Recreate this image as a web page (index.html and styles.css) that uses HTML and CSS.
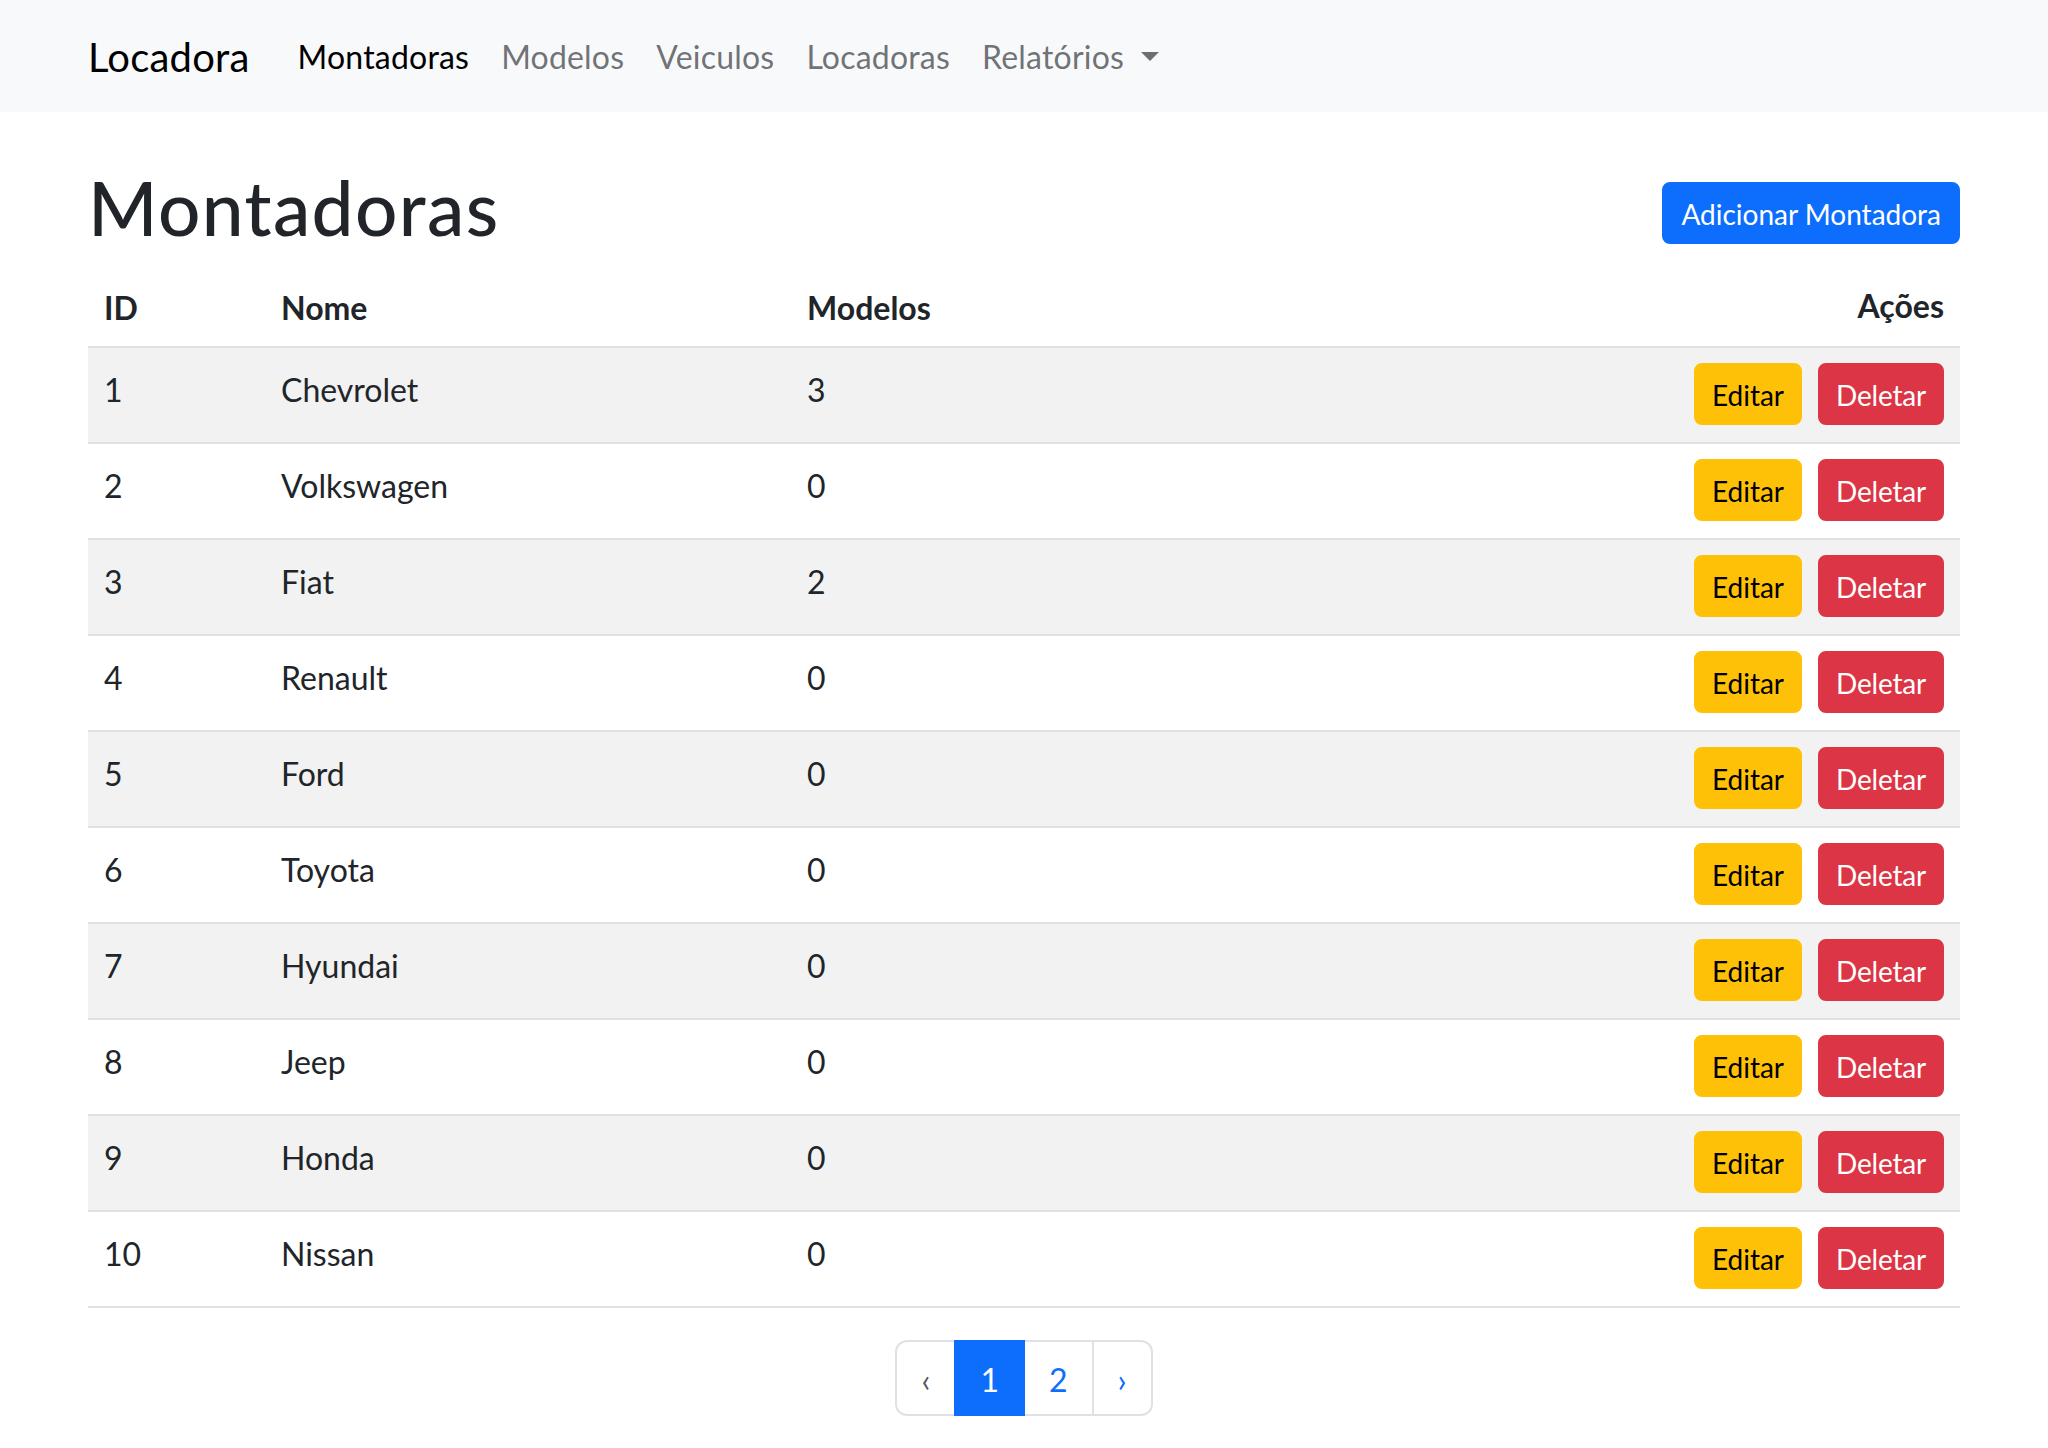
FILE: index.html
```html
<!DOCTYPE html>
<html lang="pt-BR">
<head>
<meta charset="utf-8">
<title>Montadoras</title>
<link rel="stylesheet" href="styles.css">
</head>
<body>
<nav class="navbar">
  <div class="container nav-inner">
    <a class="brand" href="#">Locadora</a>
    <ul class="nav">
      <li><a class="nav-link active" href="#">Montadoras</a></li>
      <li><a class="nav-link" href="#">Modelos</a></li>
      <li><a class="nav-link" href="#">Veiculos</a></li>
      <li><a class="nav-link" href="#">Locadoras</a></li>
      <li><a class="nav-link dropdown-toggle" href="#">Relatórios </a></li>
    </ul>
  </div>
</nav>
<main class="container">
  <div class="page-head">
    <h1>Montadoras</h1>
    <a class="btn btn-primary" href="#">Adicionar Montadora</a>
  </div>
  <table class="table">
    <colgroup>
      <col class="c-id"><col class="c-nome"><col class="c-mod"><col>
    </colgroup>
    <thead>
      <tr><th>ID</th><th>Nome</th><th>Modelos</th><th class="text-end">Ações</th></tr>
    </thead>
    <tbody>
      <tr><td>1</td><td>Chevrolet</td><td>3</td><td class="actions"><div class="acts"><a class="btn btn-warning" href="#">Editar</a><a class="btn btn-danger" href="#">Deletar</a></div></td></tr>
      <tr><td>2</td><td>Volkswagen</td><td>0</td><td class="actions"><div class="acts"><a class="btn btn-warning" href="#">Editar</a><a class="btn btn-danger" href="#">Deletar</a></div></td></tr>
      <tr><td>3</td><td>Fiat</td><td>2</td><td class="actions"><div class="acts"><a class="btn btn-warning" href="#">Editar</a><a class="btn btn-danger" href="#">Deletar</a></div></td></tr>
      <tr><td>4</td><td>Renault</td><td>0</td><td class="actions"><div class="acts"><a class="btn btn-warning" href="#">Editar</a><a class="btn btn-danger" href="#">Deletar</a></div></td></tr>
      <tr><td>5</td><td>Ford</td><td>0</td><td class="actions"><div class="acts"><a class="btn btn-warning" href="#">Editar</a><a class="btn btn-danger" href="#">Deletar</a></div></td></tr>
      <tr><td>6</td><td>Toyota</td><td>0</td><td class="actions"><div class="acts"><a class="btn btn-warning" href="#">Editar</a><a class="btn btn-danger" href="#">Deletar</a></div></td></tr>
      <tr><td>7</td><td>Hyundai</td><td>0</td><td class="actions"><div class="acts"><a class="btn btn-warning" href="#">Editar</a><a class="btn btn-danger" href="#">Deletar</a></div></td></tr>
      <tr><td>8</td><td>Jeep</td><td>0</td><td class="actions"><div class="acts"><a class="btn btn-warning" href="#">Editar</a><a class="btn btn-danger" href="#">Deletar</a></div></td></tr>
      <tr><td>9</td><td>Honda</td><td>0</td><td class="actions"><div class="acts"><a class="btn btn-warning" href="#">Editar</a><a class="btn btn-danger" href="#">Deletar</a></div></td></tr>
      <tr><td>10</td><td>Nissan</td><td>0</td><td class="actions"><div class="acts"><a class="btn btn-warning" href="#">Editar</a><a class="btn btn-danger" href="#">Deletar</a></div></td></tr>
    </tbody>
  </table>
  <nav class="pager">
    <ul class="pagination">
      <li class="page-item disabled"><span class="page-link">&lsaquo;</span></li>
      <li class="page-item active"><span class="page-link">1</span></li>
      <li class="page-item"><a class="page-link" href="#">2</a></li>
      <li class="page-item"><a class="page-link" href="#">&rsaquo;</a></li>
    </ul>
  </nav>
</main>
</body>
</html>
```
FILE: styles.css
```css
* { box-sizing: border-box; }

body {
  margin: 0;
  font-family: Lato, "Open Sans", sans-serif;
  font-size: 32px;
  line-height: 1.5;
  color: #212529;
  background: #fff;
}

.container {
  width: 1920px;
  margin: 0 auto;
  padding: 0 24px;
}

/* navbar */
.navbar {
  background: #f8f9fa;
  padding: 16px 0;
}
.nav-inner {
  display: flex;
  align-items: center;
}
.brand {
  font-size: 40px;
  line-height: 1.5;
  padding: 11px 0 9px;
  margin-right: 32px;
  color: #000;
  text-decoration: none;
  letter-spacing: 0.2px;
}
.nav {
  display: flex;
  list-style: none;
  margin: 0;
  padding: 0;
}
.nav-link {
  display: block;
  padding: 17px 16px 15px;
  color: rgba(33, 37, 41, 0.65);
  text-decoration: none;
  letter-spacing: 0.2px;
}
.nav-link.active { color: #000; }
.dropdown-toggle { white-space: pre; }
.dropdown-toggle::after {
  content: "";
  display: inline-block;
  margin-left: 0.255em;
  vertical-align: 0.255em;
  border-top: 0.3em solid;
  border-right: 0.3em solid transparent;
  border-bottom: 0;
  border-left: 0.3em solid transparent;
}

/* header */
.page-head {
  display: flex;
  justify-content: space-between;
  align-items: center;
  margin-top: 48px;
}
h1 {
  font-size: 74.7px;
  font-weight: 500;
  line-height: 1.2;
  letter-spacing: 1.4px;
  padding-top: 3px;
  margin: 0 0 13px;
}

/* buttons */
.btn {
  display: inline-block;
  font-size: 28px;
  line-height: 1.5;
  padding: 9px 16px 7px;
  border: 2px solid transparent;
  border-radius: 8px;
  text-decoration: none;
}
.btn-primary { background: #0d6efd; border-color: #0d6efd; color: #fff; padding-left: 17px; padding-right: 17px; }
.btn-warning { background: #ffc107; border-color: #ffc107; color: #000; }
.btn-danger { background: #dc3545; border-color: #dc3545; color: #fff; letter-spacing: -0.2px; }

/* table */
.table {
  width: 100%;
  border-collapse: collapse;
  table-layout: fixed;
  margin-bottom: 32px;
}
.c-id { width: 177px; }
.c-nome { width: 526px; }
.c-mod { width: 428px; }
.table th,
.table td {
  padding: 18px 16px 14px;
  border-bottom: 2px solid #dee2e6;
  text-align: left;
  vertical-align: top;
}
.table th { font-weight: 700; vertical-align: bottom; }
.table .text-end { text-align: right; padding-top: 16px; padding-bottom: 16px; }
.table td.actions { padding: 15px 16px 17px; }
.table tbody tr:nth-child(odd) td { background: #f2f2f2; }
.acts {
  display: flex;
  justify-content: flex-end;
  gap: 16px;
}

/* pagination */
.pagination {
  display: flex;
  justify-content: center;
  list-style: none;
  margin: 0;
  padding: 0;
}
.page-link {
  display: block;
  padding: 14px 24px 10px;
  font-size: 32px;
  line-height: 1.5;
  color: #0d6efd;
  background: #fff;
  border: 2px solid #dee2e6;
  text-decoration: none;
}
.page-item + .page-item .page-link { margin-left: -2px; }
.page-item:first-child .page-link { border-radius: 12px 0 0 12px; }
.page-item:last-child .page-link { border-radius: 0 12px 12px 0; }
.page-item.active .page-link {
  position: relative;
  z-index: 3;
  background: #0d6efd;
  border-color: #0d6efd;
  color: #fff;
}
.page-item.disabled .page-link { color: rgba(33, 37, 41, 0.75); }
```
